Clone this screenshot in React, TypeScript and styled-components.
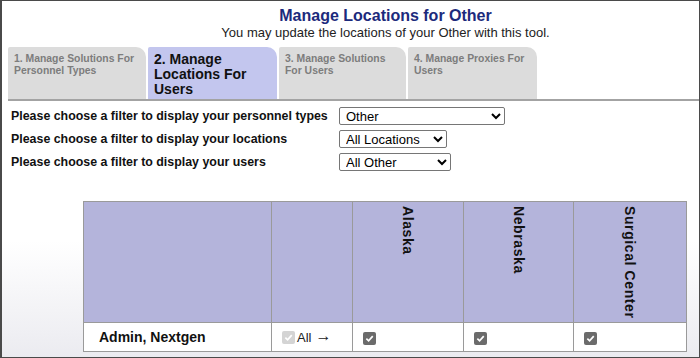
import { Fragment } from 'react';
import styled, { createGlobalStyle } from 'styled-components';

const GlobalStyle = createGlobalStyle`
  html, body {
    margin: 0;
    padding: 0;
    background: #fff;
  }
  body {
    font-family: 'Liberation Sans', Arial, sans-serif;
  }
`;

const Frame = styled.div`
  box-sizing: border-box;
  width: 700px;
  height: 358px;
  overflow: hidden;
  border: 1px solid #4a4a4a;
  border-left-width: 2px;
  background: linear-gradient(180deg, #ffffff 0, #ffffff 240px, #ebebf0 100%);
  color: #111;
`;

const Header = styled.header`
  padding: 6px 0 0 70px;
  text-align: center;
`;

const Title = styled.h1`
  margin: 0;
  font-size: 16px;
  line-height: 18px;
  font-weight: bold;
  color: #1c2a7c;
`;

const Subtitle = styled.p`
  margin: 0;
  font-size: 13px;
  line-height: 15px;
  color: #222;
`;

const TabStrip = styled.nav`
  display: flex;
  gap: 2px;
  margin: 7px 0 0 6px;
  border-bottom: 2px solid #a3a3a3;
`;

const Tab = styled.div<{ $active?: boolean; $width: number }>`
  box-sizing: border-box;
  width: ${(p) => p.$width}px;
  height: 52px;
  padding: ${(p) => (p.$active ? '5px 6px 0' : '6px 5px 0 6px')};
  border-radius: 2px 10px 0 0;
  background: ${(p) => (p.$active ? '#c3c6ee' : '#dcdcdc')};
  color: ${(p) => (p.$active ? '#111' : '#7d7d7d')};
  font-weight: bold;
  font-size: ${(p) => (p.$active ? '14px' : '10.4px')};
  line-height: ${(p) => (p.$active ? '15px' : '12px')};
`;

const Filters = styled.div`
  display: grid;
  grid-template-columns: 328px auto;
  row-gap: 5px;
  align-items: center;
  margin: 6px 0 0 9px;
`;

const FilterLabel = styled.label`
  white-space: nowrap;
  font-weight: bold;
  font-size: 12.4px;
  line-height: 18px;
  color: #111;
`;

const Select = styled.select<{ $width: number }>`
  justify-self: start;
  box-sizing: border-box;
  width: ${(p) => p.$width}px;
  height: 18px;
  padding: 0 0 0 2px;
  border: 1px solid #767676;
  border-radius: 2px;
  background: #fff;
  color: #000;
  font: 13px 'Liberation Sans', Arial, sans-serif;
`;

const Grid = styled.table`
  border-collapse: collapse;
  table-layout: fixed;
  margin: 30px 0 0 81px;
`;

const HeadCell = styled.th<{ $width: number }>`
  width: ${(p) => p.$width}px;
  height: 114px;
  padding: 4px 0 0;
  background: #b4b4db;
  border: 1px solid #9a9a9a;
  vertical-align: top;
  text-align: center;
`;

const VerticalLabel = styled.span`
  display: inline-block;
  writing-mode: vertical-rl;
  font-size: 14px;
  font-weight: bold;
  line-height: 16px;
  letter-spacing: 0.6px;
  color: #111;
`;

const Cell = styled.td`
  height: 28px;
  padding: 0 0 0 10px;
  border: 1px solid #9a9a9a;
  background: #fff;
  vertical-align: middle;
  font-size: 13px;
`;

const NameCell = styled(Cell)`
  padding-left: 15px;
  font-weight: bold;
  font-size: 14px;
`;

const AllLabel = styled.span`
  display: inline-flex;
  align-items: center;
  gap: 2px;
  color: #222;
`;

const Arrow = styled.span`
  margin-left: 2px;
  padding-bottom: 4px;
  font-size: 16px;
  line-height: 13px;
`;

const Box = styled.span<{ $disabled?: boolean }>`
  display: inline-flex;
  align-items: center;
  justify-content: center;
  width: 13px;
  height: 13px;
  border-radius: 2px;
  background: ${(p) => (p.$disabled ? '#d4d4d4' : '#6b6b6b')};
  vertical-align: middle;
`;

const Check = ({ disabled }: { disabled?: boolean }) => (
  <Box $disabled={disabled}>
    <svg width="9" height="9" viewBox="0 0 10 10">
      <path d="M1.5 5.2 L4 7.6 L8.6 2.4" fill="none" stroke="#fff" strokeWidth="1.9" />
    </svg>
  </Box>
);

const tabs = [
  { label: '1. Manage Solutions For Personnel Types', width: 138 },
  { label: '2. Manage Locations For Users', width: 129, active: true },
  { label: '3. Manage Solutions For Users', width: 127 },
  { label: '4. Manage Proxies For Users', width: 129 },
];

const filters = [
  { label: 'Please choose a filter to display your personnel types', value: 'Other', width: 166 },
  { label: 'Please choose a filter to display your locations', value: 'All Locations', width: 108 },
  { label: 'Please choose a filter to display your users', value: 'All Other', width: 112 },
];

const locations = [
  { name: 'Alaska', width: 110 },
  { name: 'Nebraska', width: 109 },
  { name: 'Surgical Center', width: 112 },
];

export default function App() {
  return (
    <>
      <GlobalStyle />
      <Frame>
        <Header>
          <Title>Manage Locations for Other</Title>
          <Subtitle>You may update the locations of your Other with this tool.</Subtitle>
        </Header>
        <TabStrip>
          {tabs.map((tab) => (
            <Tab key={tab.label} $active={tab.active} $width={tab.width}>
              {tab.label}
            </Tab>
          ))}
        </TabStrip>
        <Filters>
          {filters.map((f) => (
            <Fragment key={f.label}>
              <FilterLabel>{f.label}</FilterLabel>
              <Select $width={f.width} defaultValue={f.value}>
                <option>{f.value}</option>
              </Select>
            </Fragment>
          ))}
        </Filters>
        <Grid>
          <thead>
            <tr>
              <HeadCell $width={187} />
              <HeadCell $width={80} />
              {locations.map((l) => (
                <HeadCell key={l.name} $width={l.width}>
                  <VerticalLabel>{l.name}</VerticalLabel>
                </HeadCell>
              ))}
            </tr>
          </thead>
          <tbody>
            <tr>
              <NameCell>Admin, Nextgen</NameCell>
              <Cell>
                <AllLabel>
                  <Check disabled /> All<Arrow>→</Arrow>
                </AllLabel>
              </Cell>
              {locations.map((l) => (
                <Cell key={l.name}>
                  <Check />
                </Cell>
              ))}
            </tr>
          </tbody>
        </Grid>
      </Frame>
    </>
  );
}
